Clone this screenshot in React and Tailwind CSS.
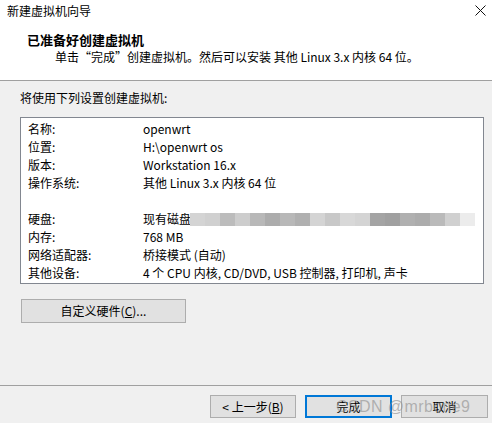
import React from "react";

const rows = [
  ["名称:", "openwrt"],
  ["位置:", "H:\\openwrt os"],
  ["版本:", "Workstation 16.x"],
  ["操作系统:", "其他 Linux 3.x 内核 64 位"],
  ["", ""],
  ["硬盘:", "现有磁盘"],
  ["内存:", "768 MB"],
  ["网络适配器:", "桥接模式 (自动)"],
  ["其他设备:", "4 个 CPU 内核, CD/DVD, USB 控制器, 打印机, 声卡"],
];

// mosaic that hides the disk path
const blur = [
  "#d4d4d4", "#d0d0d0", "#bcbcbc", "#cdcdcd", "#b8b8b8", "#acacac", "#b8b8b8",
  "#b0b0b0", "#d4d4d4", "#c8c8c8", "#d8d8d8", "#d4d4d4", "#a4a4a4", "#a0a0a0",
  "#b0b0b0", "#acacac", "#bababa", "#d0d0d0", "#ececec",
];

const font = { fontFamily: '"Noto Sans CJK SC", "Noto Sans", sans-serif' };

export default function App() {
  return (
    <div
      className="relative w-[492px] h-[423px] flex flex-col bg-[#f0f0f0] text-[12px] text-black overflow-hidden"
      style={font}
    >
      {/* Header */}
      <div className="bg-white border-b border-[#a0a0a0] h-[81px]">
        <div className="h-[21px] pl-[7px] flex items-center justify-between pr-[5px]">
          <span className="leading-[16px]">新建虚拟机向导</span>
          <svg width="11" height="11" viewBox="0 0 11 11" className="mr-[1px]">
            <path d="M0.5 0.5 L10.5 10.5 M10.5 0.5 L0.5 10.5" stroke="#111" strokeWidth="1" />
          </svg>
        </div>
        <div className="mt-[10px] pl-[27px] font-bold text-[13px] leading-[18px]">
          已准备好创建虚拟机
        </div>
        <div className="pl-[55px] leading-[16px]">
          单击“完成”创建虚拟机。然后可以安装 其他 Linux 3.x 内核 64 位。
        </div>
      </div>

      {/* Body */}
      <div className="flex-1 px-[20px]">
        <div className="pt-[9px] leading-[16px]">将使用下列设置创建虚拟机:</div>
        <div className="mt-[11px] w-[464px] bg-white border border-[#828790] pt-[2px] pb-[1px] pl-[7px]">
          {rows.map(([k, v], i) => (
            <div key={i} className="flex h-[18px] items-center leading-[18px]">
              <span className="w-[115px] shrink-0">{k}</span>
              <span className="whitespace-nowrap">{v}</span>
              {k === "硬盘:" && (
                <div className="flex h-[13px] ml-[-1px] mt-[1px]">
                  {blur.map((c, j) => (
                    <div key={j} className="w-[15px] h-full" style={{ background: c }} />
                  ))}
                </div>
              )}
            </div>
          ))}
        </div>
        <button className="mt-[15px] ml-[1px] w-[165px] h-[24px] bg-[#e1e1e1] border border-[#adadad] leading-[16px]">
          自定义硬件(<span className="underline">C</span>)...
        </button>
      </div>

      {/* Footer */}
      <div className="border-t border-[#a0a0a0] h-[38px] pt-[9px] pr-[4px] flex justify-end gap-[9px]">
        <button className="w-[86px] h-[23px] bg-[#e1e1e1] border border-[#adadad] leading-[16px]">
          &lt; 上一步(<span className="underline">B</span>)
        </button>
        <button className="w-[87px] h-[23px] bg-[#e1e1e1] border-2 border-[#0078d7] leading-[16px]">
          完成
        </button>
        <button className="w-[87px] h-[23px] bg-[#e1e1e1] border border-[#adadad] leading-[16px]">
          取消
        </button>
      </div>

      {/* watermark */}
      <span
        className="absolute left-[336px] top-[397px] text-[16px] leading-[20px] tracking-[0.4px] text-[#8c8c8c]/60 whitespace-nowrap pointer-events-none"
        style={{ fontFamily: '"Liberation Sans", Arial, sans-serif' }}
      >
        CSDN @mrbone9
      </span>
    </div>
  );
}
